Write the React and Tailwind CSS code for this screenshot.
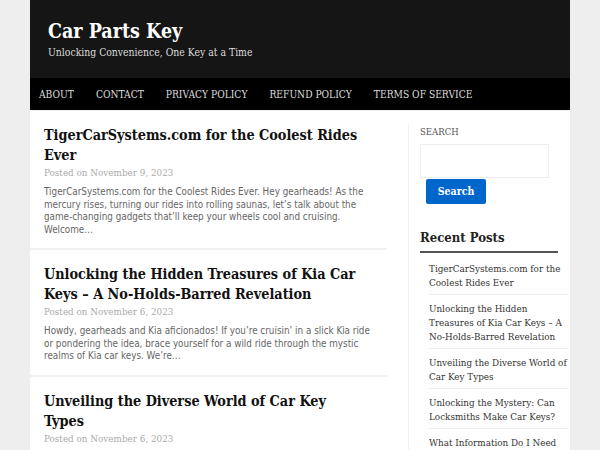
import React from "react";

const serif = { fontFamily: '"DejaVu Serif", serif', fontStretch: "condensed" };
const sans = { fontFamily: '"DejaVu Sans", sans-serif', fontStretch: "condensed" };

const navItems = ["About", "Contact", "Privacy Policy", "Refund Policy", "Terms of Service"];

const posts = [
  {
    title: "TigerCarSystems.com for the Coolest Rides Ever",
    date: "November 9, 2023",
    excerpt:
      "TigerCarSystems.com for the Coolest Rides Ever. Hey gearheads! As the mercury rises, turning our rides into rolling saunas, let’s talk about the game-changing gadgets that’ll keep your wheels cool and cruising. Welcome…",
  },
  {
    title: "Unlocking the Hidden Treasures of Kia Car Keys – A No-Holds-Barred Revelation",
    date: "November 6, 2023",
    excerpt:
      "Howdy, gearheads and Kia aficionados! If you’re cruisin’ in a slick Kia ride or pondering the idea, brace yourself for a wild ride through the mystic realms of Kia car keys. We’re…",
  },
  {
    title: "Unveiling the Diverse World of Car Key Types",
    date: "November 6, 2023",
    excerpt:
      "Car keys have come a long way from the simple metal blades of the past. Today, there is a whole world of key types to explore…",
  },
];

const recent = [
  "TigerCarSystems.com for the Coolest Rides Ever",
  "Unlocking the Hidden Treasures of Kia Car Keys – A No-Holds-Barred Revelation",
  "Unveiling the Diverse World of Car Key Types",
  "Unlocking the Mystery: Can Locksmiths Make Car Keys?",
  "What Information Do I Need to Get a Car Key Made?",
];

export default function App() {
  return (
    <div className="min-h-screen bg-[#eeeeee]">
      <div className="mx-auto w-[540px]">
        {/* Header */}
        <header className="h-[78px] bg-[#151515] px-[18px] pt-[19px]" style={serif}>
          <h1 className="text-[19.5px] font-bold leading-[26px] text-white">Car Parts Key</h1>
          <p className="text-[10.35px] leading-[14px] text-[#dddddd]">
            Unlocking Convenience, One Key at a Time
          </p>
        </header>

        {/* Nav */}
        <nav className="flex h-[32px] items-center bg-black px-[9px] pt-px" style={serif}>
          {navItems.map((item) => (
            <a key={item} className="mr-[22px] text-[10.2px] uppercase text-[#dddddd]">
              {item}
            </a>
          ))}
        </nav>

        {/* Main */}
        <div className="mt-px flex bg-white">
          <main className="w-[357px]">
            {posts.map((post) => (
              <article key={post.title} className="border-b-2 border-[#f0f0f0] px-[14px] pb-[12px] pt-[14px]">
                <h2 className="mr-[8px] text-[14.3px] font-bold leading-[20px] text-[#111111]" style={serif}>
                  {post.title}
                </h2>
                <p className="mt-px text-[9.8px] leading-[14px] text-[#aaaaaa]" style={serif}>
                  Posted on {post.date}
                </p>
                <p className="mt-[6px] text-[9.8px] leading-[12.5px] text-[#666666]" style={sans}>
                  {post.excerpt}
                </p>
              </article>
            ))}
          </main>

          {/* Sidebar */}
          <aside className="ml-[21px] mt-[12px] flex-1 border-l border-[#f0f0f0] pl-[11px] pt-[2px]" style={serif}>
            <p className="text-[9.5px] uppercase leading-[14px] text-[#555555]">Search</p>
            <input className="mt-[5px] block h-[34px] w-[129px] border border-[#eeeeee] bg-white" />
            <button className="ml-[6px] mt-px h-[25px] w-[60px] rounded-[2px] bg-[#0066cc] text-[10.5px] font-bold text-white">
              Search
            </button>

            <h3 className="mt-[25px] w-[138px] border-b-2 border-[#555555] pb-[4px] text-[13px] font-bold leading-[18px] text-[#222222]">
              Recent Posts
            </h3>
            <ul className="ml-[9px] mr-[2px] mt-[2px]">
              {recent.map((r) => (
                <li
                  key={r}
                  className="border-b border-[#eeeeee] pb-[4px] pr-px pt-[7px] text-[9.8px] leading-[14px] text-[#333333]"
                >
                  {r}
                </li>
              ))}
            </ul>
          </aside>
        </div>
      </div>
    </div>
  );
}
